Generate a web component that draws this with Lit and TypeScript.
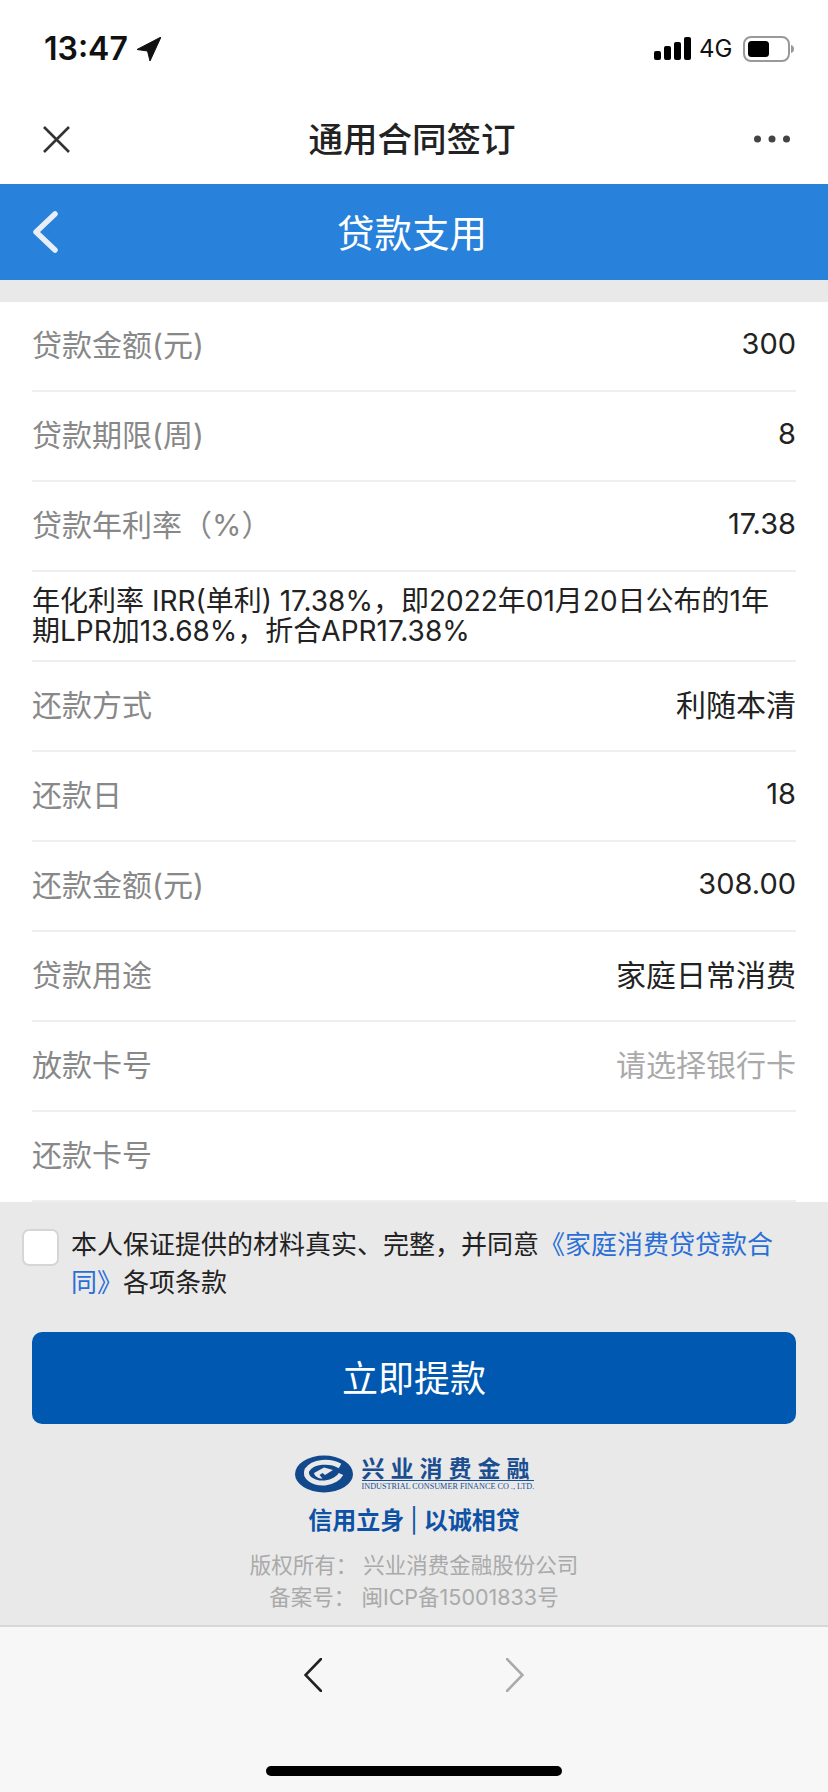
import { LitElement, html, css } from 'lit';
import { customElement } from 'lit/decorators.js';

interface Row {
  label: string;
  value?: string;
  hint?: boolean;
  num?: boolean;
}

const rowsTop: Row[] = [
  { label: '贷款金额(元)', value: '300', num: true },
  { label: '贷款期限(周)', value: '8', num: true },
  { label: '贷款年利率（%）', value: '17.38', num: true },
];

const rowsBottom: Row[] = [
  { label: '还款方式', value: '利随本清' },
  { label: '还款日', value: '18', num: true },
  { label: '还款金额(元)', value: '308.00', num: true },
  { label: '贷款用途', value: '家庭日常消费' },
  { label: '放款卡号', value: '请选择银行卡', hint: true },
  { label: '还款卡号' },
];

@customElement('app-root')
export class AppRoot extends LitElement {
  static styles = css`
    :host {
      display: flex;
      flex-direction: column;
      width: 828px;
      height: 1792px;
      background: #fff;
      font-family: 'Inter', 'Noto Sans CJK SC', sans-serif;
      color: #222;
    }

    .status {
      height: 92px;
      padding: 5px 33px 0 44px;
      box-sizing: border-box;
      display: flex;
      align-items: center;
      justify-content: space-between;
    }
    .time {
      display: flex;
      align-items: center;
      gap: 9px;
      font-size: 32px;
      font-weight: 600;
      color: #111;
    }
    .signal {
      display: flex;
      align-items: center;
      gap: 8px;
    }
    .net {
      font-size: 24px;
      color: #111;
      width: 36px;
    }

    .nav {
      height: 92px;
      box-sizing: border-box;
      padding: 2px 38px 0 43px;
      display: flex;
      align-items: center;
      justify-content: space-between;
    }
    .nav-title {
      font-size: 34.500px;
      font-weight: 500;
      color: #222;
      padding-bottom: 4px;
    }

    .head {
      height: 96px;
      background: #2881da;
      padding: 0 32px;
      display: grid;
      grid-template-columns: 1fr auto 1fr;
      align-items: center;
    }
    .head-title {
      font-size: 37.500px;
      color: #fff;
      margin-right: 4px;
      padding-bottom: 4px;
    }

    .list {
      border-top: 22px solid #e9e9e9;
      padding: 0 32px;
    }
    .row {
      height: 90px;
      box-sizing: border-box;
      border-bottom: 2px solid #efefef;
      padding-bottom: 6px;
      display: flex;
      align-items: center;
      justify-content: space-between;
      font-size: 30px;
    }
    .label {
      color: #888;
    }
    .value {
      color: #222;
    }
    .value.num {
      font-size: 29px;
    }
    .value.hint {
      color: #aaa;
    }
    .note {
      height: 90px;
      box-sizing: border-box;
      border-bottom: 2px solid #efefef;
      padding: 0 10px 0 0;
      display: flex;
      align-items: center;
      font-size: 28px;
      line-height: 30px;
      color: #222;
    }

    .foot {
      flex: 1;
      background: #e9e9e9;
    }
    .agree {
      padding: 24px 32px 0 22px;
      display: flex;
      gap: 12px;
      font-size: 26px;
      line-height: 38px;
      color: #222;
    }
    .box {
      flex: none;
      width: 37px;
      height: 37px;
      margin-top: 3px;
      box-sizing: border-box;
      background: #fff;
      border: 2px solid #d6d6d6;
      border-radius: 7px;
    }
    .agree a {
      color: #2a6fd6;
      text-decoration: none;
    }
    .btn {
      margin: 30px 32px 0;
      height: 92px;
      box-sizing: border-box;
      padding-bottom: 5px;
      background: #0058b0;
      border-radius: 10px;
      display: flex;
      align-items: center;
      justify-content: center;
      color: #fff;
      font-size: 36px;
    }
    .brand {
      margin-top: 31px;
      display: flex;
      justify-content: center;
      align-items: flex-start;
      gap: 9px;
    }
    .brand-text {
      width: 172px;
    }
    .brand-cn {
      font-family: 'Noto Sans CJK SC', sans-serif;
      font-size: 23px;
      line-height: 25px;
      font-weight: 700;
      color: #1a4e91;
      letter-spacing: 6px;
      border-bottom: 1px solid #1a4e91;
      white-space: nowrap;
    }
    .brand-en {
      font-family: 'Liberation Serif', serif;
      font-size: 8.200px;
      line-height: 11px;
      color: #1a4e91;
      white-space: nowrap;
    }
    .slogan {
      margin-top: 11px;
      text-align: center;
      font-size: 24px;
      line-height: 34px;
      font-weight: 700;
      color: #0f52a5;
    }
    .slogan span {
      font-weight: 400;
    }
    .copy {
      margin-top: 11px;
      text-align: center;
      font-size: 21.500px;
      line-height: 32px;
      color: #aaa;
    }

    .bar {
      height: 167px;
      box-sizing: border-box;
      background: #f7f7f7;
      border-top: 2px solid #d8d8d8;
      display: flex;
      flex-direction: column;
      align-items: center;
    }
    .arrows {
      margin-top: 31px;
      display: flex;
      gap: 184px;
    }
    .home {
      margin-top: 74px;
      width: 296px;
      height: 10px;
      border-radius: 5px;
      background: #000;
    }
  `;

  renderRow(r: Row) {
    return html`<div class="row">
      <span class="label">${r.label}</span>
      <span class="value ${r.hint ? 'hint' : ''} ${r.num ? 'num' : ''}">${r.value ?? ''}</span>
    </div>`;
  }

  render() {
    return html`
      <div class="status">
        <div class="time">
          13:47
          <svg width="24" height="24" viewBox="0 0 24 24"><path d="M24 0 0 12.500l10.500 1.500L13 24Z" fill="#111" stroke="#111" stroke-width="1" stroke-linejoin="round"/></svg>
        </div>
        <div class="signal">
          <svg width="37" height="23" viewBox="0 0 37 23" fill="#000">
            <rect x="0" y="14" width="7" height="9" rx="2"/>
            <rect x="10" y="9" width="7" height="14" rx="2"/>
            <rect x="20" y="5" width="7" height="18" rx="2"/>
            <rect x="30" y="0" width="7" height="23" rx="2"/>
          </svg>
          <span class="net">4G</span>
          <svg width="52" height="26" viewBox="0 0 52 26">
            <rect x="1" y="1" width="45" height="24" rx="7" fill="none" stroke="#999" stroke-width="2"/>
            <rect x="5" y="5" width="21" height="16" rx="3.500" fill="#000"/>
            <path d="M48 9c2 .5 3 2 3 4s-1 3.500-3 4Z" fill="#999"/>
          </svg>
        </div>
      </div>

      <div class="nav">
        <svg width="27" height="27" viewBox="0 0 27 27" stroke="#333" stroke-width="2.600" fill="none"><path d="M1 1 26 26M26 1 1 26"/></svg>
        <span class="nav-title">通用合同签订</span>
        <svg width="36" height="8" viewBox="0 0 36 8" fill="#444"><circle cx="3.500" cy="4" r="3.500"/><circle cx="18" cy="4" r="3.500"/><circle cx="32.500" cy="4" r="3.500"/></svg>
      </div>

      <div class="head">
        <svg width="26" height="42" viewBox="0 0 26 42" fill="none" stroke="#e9eef4" stroke-width="5.500" stroke-linecap="round" stroke-linejoin="round"><path d="M23 3 4 21l19 18"/></svg>
        <span class="head-title">贷款支用</span>
        <span></span>
      </div>

      <div class="list">
        ${rowsTop.map((r) => this.renderRow(r))}
        <div class="note">
          <div>年化利率 IRR(单利) 17.38%，即2022年01月20日公布的1年期LPR加13.68%，折合APR17.38%</div>
        </div>
        ${rowsBottom.map((r) => this.renderRow(r))}
      </div>

      <div class="foot">
        <div class="agree">
          <span class="box"></span>
          <div>本人保证提供的材料真实、完整，并同意<a>《家庭消费贷贷款合同》</a>各项条款</div>
        </div>
        <div class="btn">立即提款</div>
        <div class="brand">
          <svg width="58" height="38" viewBox="0 0 58 38">
            <ellipse cx="29" cy="19" rx="29" ry="18.500" fill="#12488c"/>
            <path d="M45 11C35 5 18 6 12 15c-3 7 6 14 18 13 8-1 14-5 16-9" fill="none" stroke="#e9e9e9" stroke-width="5"/>
            <path d="M19 18 29 12.500 38 15l-8 5-2.500-2-3 2 3 3.500c-4 0-8-2-8.500-5.500Z" fill="#e9e9e9"/>
          </svg>
          <div class="brand-text">
            <div class="brand-cn">兴业消费金融</div>
            <div class="brand-en">INDUSTRIAL CONSUMER FINANCE CO ., LTD.</div>
          </div>
        </div>
        <div class="slogan">信用立身 <span>|</span> 以诚相贷</div>
        <div class="copy">版权所有： 兴业消费金融股份公司<br />备案号： 闽ICP备15001833号</div>
      </div>

      <div class="bar">
        <div class="arrows">
          <svg width="18" height="34" viewBox="0 0 18 34" fill="none" stroke="#222" stroke-width="2.600" stroke-linecap="round"><path d="M17 1 1.500 17 17 33"/></svg>
          <svg width="18" height="34" viewBox="0 0 18 34" fill="none" stroke="#aaa" stroke-width="2.600" stroke-linecap="round"><path d="M1 1 16.500 17 1 33"/></svg>
        </div>
        <div class="home"></div>
      </div>
    `;
  }
}
